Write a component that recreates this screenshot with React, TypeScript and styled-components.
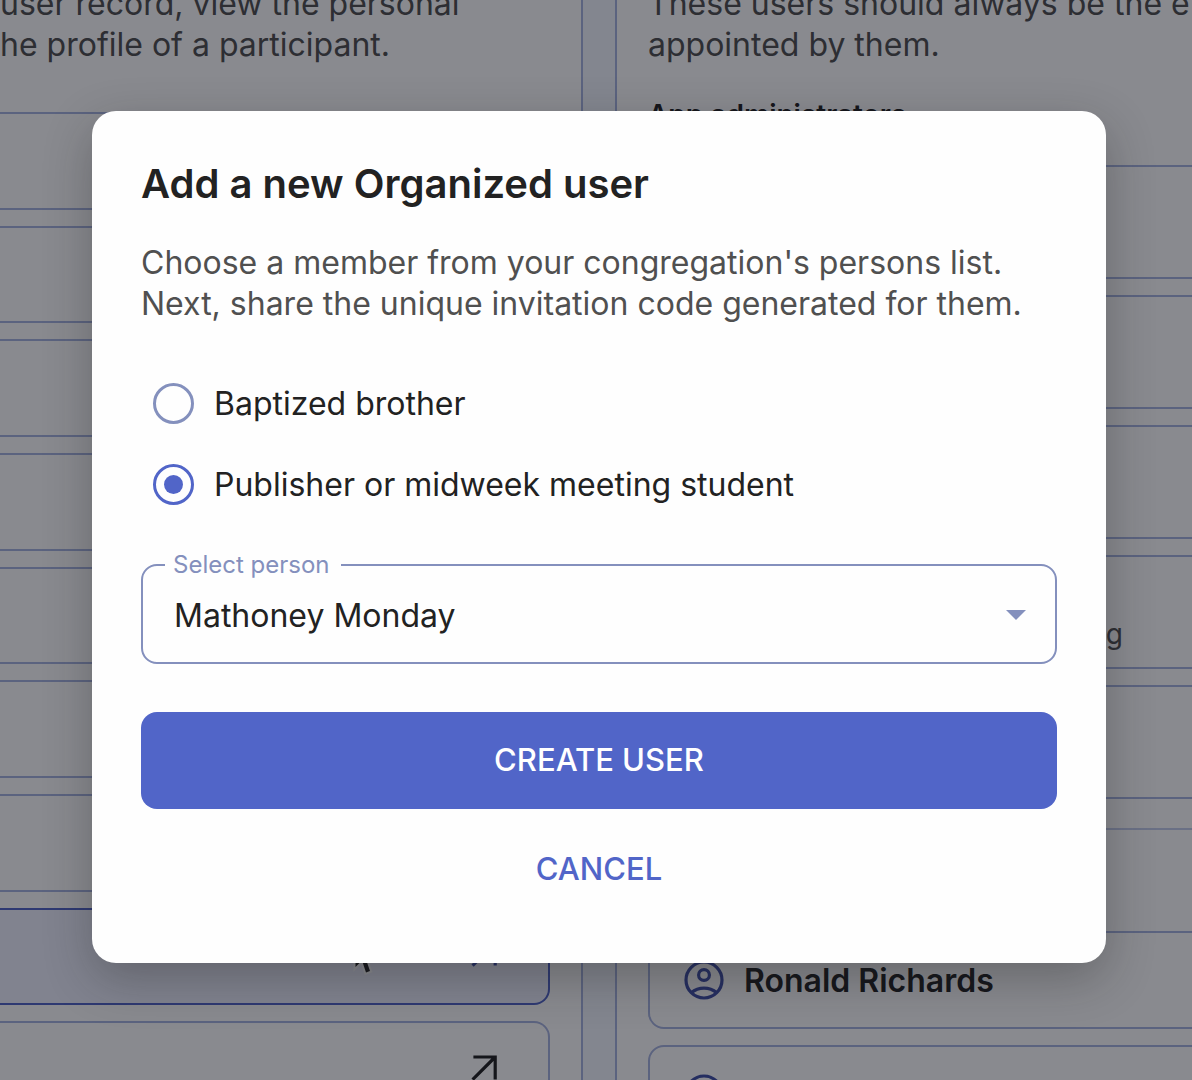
import React, { useState } from "react";
import styled, { createGlobalStyle } from "styled-components";

const GlobalStyle = createGlobalStyle`
  *, *::before, *::after { box-sizing: border-box; }
  body {
    margin: 0;
    background: #f4f7ff;
    color: #222222;
    font-family: Inter, "Liberation Sans", sans-serif;
  }
  h2, h3, p, ul { margin: 0; padding: 0; }
`;

const Screen = styled.div`
  position: relative;
  height: 100vh;
  overflow: hidden;
`;

const Page = styled.main`
  display: grid;
  grid-template-columns: 583px minmax(0, 1fr);
  gap: 32px;
  margin: -17px -64px 0 0;
`;

const Panel = styled.section<{ $edge: "left" | "right" }>`
  background: #ffffff;
  border: 0 solid #a8b4e0;
  border-right-width: ${(p) => (p.$edge === "right" ? "2px" : "0")};
  border-left-width: ${(p) => (p.$edge === "left" ? "2px" : "0")};
  padding: ${(p) => (p.$edge === "right" ? "0 31px 0 0" : "0 31px")};
`;

const Text = styled.p`
  color: #505050;
  font-size: 32px;
  line-height: 41px;
  white-space: pre;
`;

const GroupTitle = styled.h3`
  margin: 30px 0;
  font-size: 28px;
  font-weight: 600;
  line-height: 40px;
`;

const PersonList = styled.ul`
  display: grid;
  grid-auto-rows: 1fr;
  gap: 16px;
  height: 1007px;
  margin-top: 47px;
  list-style: none;
`;

const UserList = styled.ul`
  display: grid;
  gap: 16px;
  list-style: none;
`;

const Divider = styled.hr`
  margin: 29px 0 101px;
  border: 0;
  border-top: 2px solid #c4cdec;
`;

const Card = styled.li<{ $tall?: boolean }>`
  display: flex;
  align-items: center;
  gap: 16px;
  min-height: ${(p) => (p.$tall ? "114px" : "98px")};
  padding: 0 100px 0 30px;
  border: 2px solid #a8b4e0;
  border-radius: 16px;
  background: #ffffff;
`;

const OpenCard = styled.li<{ $active?: boolean }>`
  position: relative;
  display: flex;
  align-items: center;
  justify-content: flex-end;
  padding-right: 38px;
  border: 2px solid ${(p) => (p.$active ? "#5165c8" : "#a8b4e0")};
  border-left-width: 0;
  border-radius: 0 16px 16px 0;
  background: ${(p) => (p.$active ? "#f0f2ff" : "#ffffff")};
  color: ${(p) => (p.$active ? "#4050a8" : "#222222")};
`;

const Name = styled.span`
  font-size: 32px;
  font-weight: 600;
  line-height: 41px;
`;

const Note = styled.span`
  margin: 44px 0 0 auto;
  color: #505050;
  font-size: 28px;
  line-height: 40px;
`;

const Icon = styled.svg`
  display: block;
  flex: none;
  width: 48px;
  height: 48px;
  fill: none;
  stroke: currentColor;
  stroke-width: 1.6;
`;

const AccountIcon = styled(Icon)`
  color: #4050a8;
`;

const Pointer = styled.svg`
  position: absolute;
  right: 168px;
  bottom: 26px;
  width: 32px;
  height: 44px;
`;

const Overlay = styled.div`
  position: absolute;
  inset: 0;
  display: flex;
  align-items: center;
  justify-content: center;
  padding: 0 86px 6px 92px;
  background: rgba(8, 10, 20, 0.48);
`;

const Dialog = styled.form`
  display: flex;
  flex: 1;
  flex-direction: column;
  padding: 48px 49px 46px;
  border-radius: 24px;
  background: #fefefe;
  box-shadow: 0 16px 48px rgba(28, 28, 28, 0.3);
`;

const Title = styled.h2`
  margin-bottom: 33px;
  font-size: 40px;
  font-weight: 600;
  line-height: 50px;
`;

const Choices = styled.div`
  margin: 39px 0;
`;

const Choice = styled.label`
  display: flex;
  align-items: center;
  gap: 20px;
  height: 81px;
  padding-left: 12px;
  font-size: 32px;
  line-height: 41px;
`;

const Radio = styled.input`
  display: grid;
  flex: none;
  place-items: center;
  width: 41px;
  height: 41px;
  margin: 0;
  border: 3px solid #8490bd;
  border-radius: 50%;
  appearance: none;

  &:checked { border-color: #5165c8; }
  &:checked::before {
    width: 19px;
    height: 19px;
    border-radius: 50%;
    background: #5165c8;
    content: "";
  }
`;

const Field = styled.div`
  position: relative;
  display: grid;
  margin-bottom: 48px;
`;

const FieldLabel = styled.label`
  position: absolute;
  top: -15px;
  left: 24px;
  padding: 0 12px 0 8px;
  background: #fefefe;
  color: #8490bd;
  font-size: 24px;
  line-height: 32px;
`;

const Select = styled.select`
  height: 100px;
  padding: 2px 80px 0 31px;
  border: 2px solid #8490bd;
  border-radius: 16px;
  background: transparent;
  color: #222222;
  font: 32px/41px Inter, "Liberation Sans", sans-serif;
  appearance: none;
`;

const Caret = styled.svg`
  position: absolute;
  top: 46px;
  right: 31px;
  width: 20px;
  height: 10px;
  fill: #8490bd;
  pointer-events: none;
`;

const Button = styled.button<{ $primary?: boolean }>`
  height: ${(p) => (p.$primary ? "97px" : "96px")};
  margin-bottom: ${(p) => (p.$primary ? "12px" : "0")};
  padding: 0 16px 2px;
  border: 0;
  border-radius: 16px;
  background: ${(p) => (p.$primary ? "#5165c8" : "transparent")};
  color: ${(p) => (p.$primary ? "#ffffff" : "#5165c8")};
  font: 500 31px/41px Inter, "Liberation Sans", sans-serif;
  text-transform: uppercase;
`;

const OpenArrow = () => (
  <Icon viewBox="0 0 24 24" aria-hidden="true">
    <path d="M5.7 5.5h10.9v11.2M16.6 5.5 5.3 16.8" />
  </Icon>
);

const Account = () => (
  <AccountIcon viewBox="0 0 24 24" aria-hidden="true">
    <circle cx="12" cy="12" r="9" />
    <circle cx="12" cy="9.5" r="2.7" />
    <path d="M5.6 18.4C7.3 17 9.4 16.1 12 16.1s4.7.9 6.4 2.3" />
  </AccountIcon>
);

const people = ["a", "b", "c", "d", "e", "f", "g", "h", "i"];
const admins = ["a", "b", "c", "d", "e"];

export default function App() {
  const [kind, setKind] = useState("publisher");

  return (
    <>
      <GlobalStyle />
      <Screen>
        <Page>
          <Panel $edge="right">
            <Text>{"user record, view the personal\nhe profile of a participant."}</Text>
            <PersonList>
              {people.map((id, i) => (
                <OpenCard key={id} $active={i === 7}>
                  <OpenArrow />
                  {i === 7 && (
                    <Pointer viewBox="0 0 32 44" aria-hidden="true">
                      <path
                        d="M7.5 4v30l6.5-6.5 4 12 4-1.5-4-11.5h9z"
                        fill="#222222"
                        stroke="#ffffff"
                        strokeWidth="4"
                        paintOrder="stroke"
                      />
                    </Pointer>
                  )}
                </OpenCard>
              ))}
            </PersonList>
          </Panel>
          <Panel $edge="left">
            <Text>{"These users should always be the e\nappointed by them."}</Text>
            <GroupTitle>App administrators</GroupTitle>
            <UserList>
              {admins.map((id, i) => (
                <Card key={id} $tall>{i === 3 && <Note>g</Note>}</Card>
              ))}
            </UserList>
            <Divider />
            <UserList>
              <Card>
                <Account />
                <Name>Ronald Richards</Name>
              </Card>
              <Card>
                <Account />
              </Card>
            </UserList>
          </Panel>
        </Page>

        <Overlay>
          <Dialog role="dialog" aria-labelledby="dialog-title" onSubmit={(e) => e.preventDefault()}>
            <Title id="dialog-title">Add a new Organized user</Title>
            <Text>{"Choose a member from your congregation's persons list.\nNext, share the unique invitation code generated for them."}</Text>
            <Choices role="radiogroup">
              <Choice>
                <Radio type="radio" name="kind" checked={kind === "brother"} onChange={() => setKind("brother")} />
                Baptized brother
              </Choice>
              <Choice>
                <Radio type="radio" name="kind" checked={kind === "publisher"} onChange={() => setKind("publisher")} />
                Publisher or midweek meeting student
              </Choice>
            </Choices>
            <Field>
              <Select id="person" defaultValue="Mathoney Monday">
                <option>Mathoney Monday</option>
              </Select>
              <FieldLabel htmlFor="person">Select person</FieldLabel>
              <Caret viewBox="0 0 20 10" aria-hidden="true">
                <path d="M0 0h20L10 10z" />
              </Caret>
            </Field>
            <Button type="submit" $primary>Create user</Button>
            <Button type="button">Cancel</Button>
          </Dialog>
        </Overlay>
      </Screen>
    </>
  );
}
